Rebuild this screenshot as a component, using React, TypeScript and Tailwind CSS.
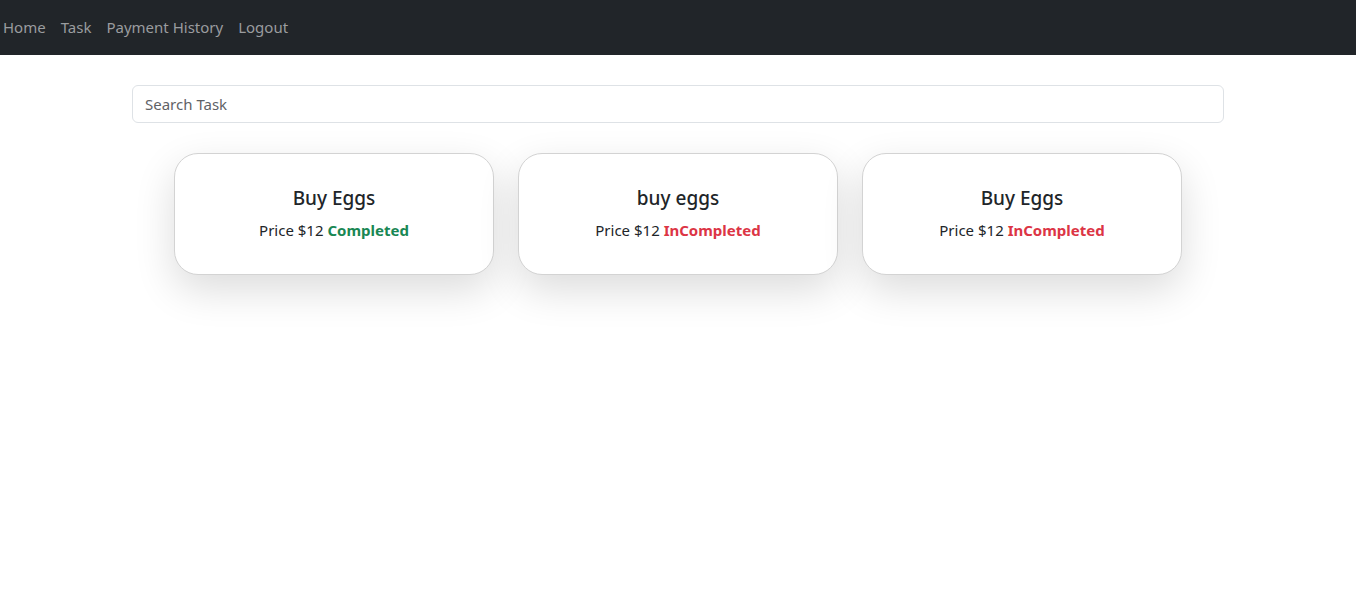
const tasks = [
  { title: "Buy Eggs", price: 12, done: true },
  { title: "buy eggs", price: 12, done: false },
  { title: "Buy Eggs", price: 12, done: false },
];

const App = () => {
  return (
    <div className="min-h-screen bg-white text-[#212529] font-['Noto_Sans',sans-serif]">
      <nav className="h-[55px] bg-[#212529] flex items-center pl-[3px] pb-[2px]">
        <ul className="flex items-center gap-[15px] text-[15px] leading-6 text-[#9a9c9f]">
          <li>Home</li>
          <li>Task</li>
          <li>Payment History</li>
          <li>Logout</li>
        </ul>
      </nav>
      <main className="w-[1092px] mx-auto pt-[30px]">
        <input
          type="text"
          placeholder="Search Task"
          className="w-full h-[38px] px-3 border border-[#dee2e6] rounded-md text-[15px] placeholder:text-[#5f6266] outline-none"
        />
        <div className="flex justify-center gap-6 mt-[30px]">
          {tasks.map((task, i) => (
            <div
              key={i}
              className="w-[320px] h-[122px] bg-white border border-[#d3d3d3] rounded-3xl shadow-[0_15px_40px_rgba(0,0,0,0.14)] flex flex-col items-center justify-center"
            >
              <h5 className="text-[19px] leading-6 mb-2 font-medium">{task.title}</h5>
              <p className="text-[15px] leading-6">
                Price ${task.price}{" "}
                {task.done ? (
                  <span className="font-bold text-[#198754]">Completed</span>
                ) : (
                  <span className="font-bold text-[#dc3545]">InCompleted</span>
                )}
              </p>
            </div>
          ))}
        </div>
      </main>
    </div>
  );
};

export default App;
